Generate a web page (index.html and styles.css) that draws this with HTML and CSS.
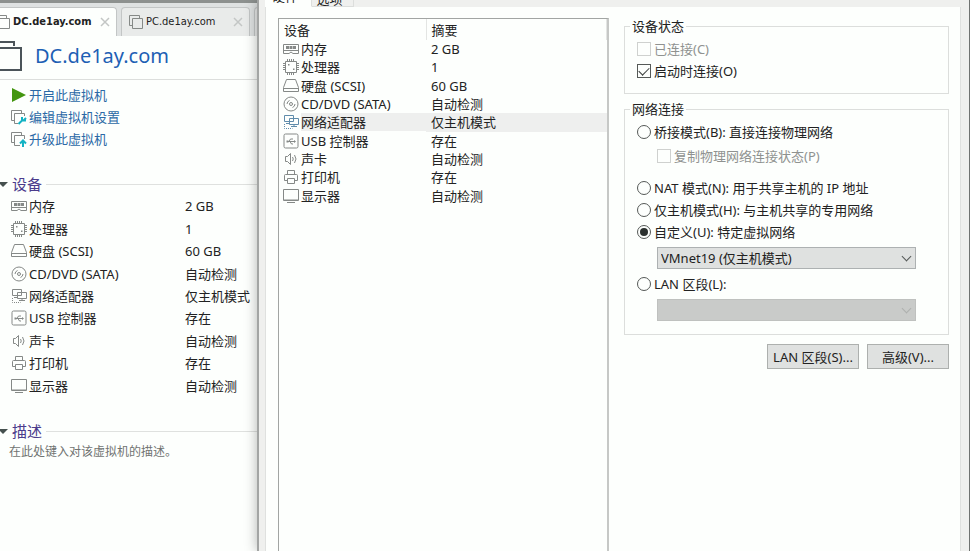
FILE: index.html
```html
<!DOCTYPE html>
<html lang="zh-CN">
  <head>
    <meta charset="UTF-8" />
    <meta name="viewport" content="width=device-width, initial-scale=1.0" />
    <title>DC.de1ay.com</title>
    <link rel="stylesheet" href="styles.css">
  </head>
  <body>
    <!-- icons used in both device lists -->
    <svg class="sprite" aria-hidden="true">
      <symbol id="i-memory" viewBox="0 0 18 16">
        <path d="M1.5 3.5h15v9h-5.5l-2-1.5-2 1.5h-5.500zM1.500 9.500h15"/>
        <path class="solid" d="M4 5h3v3H4zM7.500 5h3v3h-3zM11 5h3v3h-3z"/>
      </symbol>
      <symbol id="i-cpu" viewBox="0 0 18 16">
        <path d="M3.500 2.500h11v11h-11z"/>
        <path d="M5.500 0v2M7.500 0v2M9.500 0v2M11.500 0v2M5.500 14v2M7.500 14v2M9.500 14v2M11.500 14v2M1 4.500h2M1 6.500h2M1 8.500h2M1 10.500h2M15 4.500h2M15 6.500h2M15 8.500h2M15 10.500h2"/>
        <path class="solid" d="M6 5h1.500v1.500H6zM11 9.500h1.500V11H11z"/>
      </symbol>
      <symbol id="i-disk" viewBox="0 0 18 16">
        <path d="M4.500 1.500h9l3 8v4h-15v-4zM1.500 10.500h15"/>
      </symbol>
      <symbol id="i-cd" viewBox="0 0 18 16">
        <circle cx="9" cy="8" r="7"/>
        <circle cx="9" cy="8" r="1.500"/>
        <path d="M5 8a4 4 0 0 1 2.500-3.500M13 8a4 4 0 0 1-2.500 3.500"/>
      </symbol>
      <symbol id="i-net" viewBox="0 0 18 16">
        <path d="M2.500 1.500h9v6h-9zM4 9.500h4"/>
        <path class="fill" d="M7.500 4.500h9v6h-9z"/>
        <path d="M12 11v1.500M9 12.500h6"/>
        <path d="M2.500 10v4.500h8" stroke-dasharray="1 1"/>
      </symbol>
      <symbol id="i-usb" viewBox="0 0 18 16">
        <rect x="2" y="1" width="14" height="14" rx="1.500"/>
        <path d="M5 8.500h8M7 8.500L8.500 6h2.500M8 8.500l1.500 2.500H11"/>
        <path class="solid" d="M4.500 7.500h2v2h-2zM12 7l2 1.500-2 1.500z"/>
      </symbol>
      <symbol id="i-sound" viewBox="0 0 18 16">
        <path d="M3.500 5.500h2l3-3v11l-3-3h-2zM10.500 6q1.500 2 0 4M12.500 4q3 4 0 8"/>
      </symbol>
      <symbol id="i-printer" viewBox="0 0 18 16">
        <path d="M5.500 5V1.500h7V5M5 11.500H2.500v-5q0-1 1-1h11q1 0 1 1v5H13M5.500 9.500h7v5h-7z"/>
      </symbol>
      <symbol id="i-display" viewBox="0 0 18 16">
        <path d="M1.500 1.500h15v11h-15zM5 14.500h8"/>
        <path d="M2 12h14"/>
      </symbol>
      <symbol id="i-vm" viewBox="0 0 18 16">
        <path d="M2.500 11.500v-10h10M5.500 4.500h10v10h-10zM2.500 11.500H5M12.500 1.500V4"/>
      </symbol>
    </svg>

    <main class="vm">
      <nav class="vm-tabs">
        <div class="vm-tab active">
          <svg class="icon"><use href="#i-vm"/></svg>
          <a href="#">DC.de1ay.com</a>
          <button class="close" aria-label="关闭"><svg viewBox="0 0 10 10"><path d="M1 1l8 8M9 1l-8 8"/></svg></button>
        </div>
        <div class="vm-tab">
          <svg class="icon"><use href="#i-vm"/></svg>
          <a href="#">PC.de1ay.com</a>
          <button class="close" aria-label="关闭"><svg viewBox="0 0 10 10"><path d="M1 1l8 8M9 1l-8 8"/></svg></button>
        </div>
        <div class="vm-tab"></div>
      </nav>

      <header class="vm-title">
        <svg class="vm-logo" viewBox="0 0 34 32"><path d="M2 24V2h24v4M11 8h22v22H11z"/></svg>
        <h1>DC.de1ay.com</h1>
      </header>

      <ul class="actions">
        <li><a href="#"><svg class="icon play" viewBox="0 0 18 16"><path d="M2 1l14 7-14 7z"/></svg>开启此虚拟机</a></li>
        <li><a href="#"><svg class="icon" viewBox="0 0 18 16"><path d="M4 11.500H1.500v-10h10V4M8 14.500H4.500v-10h10V7"/><path class="teal" d="M8.500 15l4-4M12 8v3.500h4M16 9l-2.500 2.500"/></svg>编辑虚拟机设置</a></li>
        <li><a href="#"><svg class="icon" viewBox="0 0 18 16"><path d="M4 11.500H1.500v-10h10V4M10 14.500H4.500v-10h10V8"/><path class="teal" d="M13 16v-5M10 12.500l3-3 3 3"/></svg>升级此虚拟机</a></li>
      </ul>

      <section>
        <h2>设备</h2>
        <table class="devices">
          <tr><th><svg class="icon"><use href="#i-memory"/></svg>内存</th><td>2 GB</td></tr>
          <tr><th><svg class="icon"><use href="#i-cpu"/></svg>处理器</th><td>1</td></tr>
          <tr><th><svg class="icon"><use href="#i-disk"/></svg>硬盘 (SCSI)</th><td>60 GB</td></tr>
          <tr><th><svg class="icon"><use href="#i-cd"/></svg>CD/DVD (SATA)</th><td>自动检测</td></tr>
          <tr><th><svg class="icon"><use href="#i-net"/></svg>网络适配器</th><td>仅主机模式</td></tr>
          <tr><th><svg class="icon"><use href="#i-usb"/></svg>USB 控制器</th><td>存在</td></tr>
          <tr><th><svg class="icon"><use href="#i-sound"/></svg>声卡</th><td>自动检测</td></tr>
          <tr><th><svg class="icon"><use href="#i-printer"/></svg>打印机</th><td>存在</td></tr>
          <tr><th><svg class="icon"><use href="#i-display"/></svg>显示器</th><td>自动检测</td></tr>
        </table>
      </section>

      <section>
        <h2>描述</h2>
        <p>在此处键入对该虚拟机的描述。</p>
      </section>
    </main>

    <div class="dialog" role="dialog" aria-label="虚拟机设置">
      <div class="dialog-tabs">
        <button class="active">硬件</button>
        <button>选项</button>
      </div>

      <div class="dialog-page">
        <div class="hardware">
          <table>
            <thead>
              <tr><th>设备</th><th>摘要</th></tr>
            </thead>
            <tbody>
              <tr><td><svg class="icon"><use href="#i-memory"/></svg><span>内存</span></td><td>2 GB</td></tr>
              <tr><td><svg class="icon"><use href="#i-cpu"/></svg><span>处理器</span></td><td>1</td></tr>
              <tr><td><svg class="icon"><use href="#i-disk"/></svg><span>硬盘 (SCSI)</span></td><td>60 GB</td></tr>
              <tr><td><svg class="icon"><use href="#i-cd"/></svg><span>CD/DVD (SATA)</span></td><td>自动检测</td></tr>
              <tr class="selected"><td><svg class="icon"><use href="#i-net"/></svg><span>网络适配器</span></td><td>仅主机模式</td></tr>
              <tr><td><svg class="icon"><use href="#i-usb"/></svg><span>USB 控制器</span></td><td>存在</td></tr>
              <tr><td><svg class="icon"><use href="#i-sound"/></svg><span>声卡</span></td><td>自动检测</td></tr>
              <tr><td><svg class="icon"><use href="#i-printer"/></svg><span>打印机</span></td><td>存在</td></tr>
              <tr><td><svg class="icon"><use href="#i-display"/></svg><span>显示器</span></td><td>自动检测</td></tr>
            </tbody>
          </table>
        </div>

        <form class="settings">
          <fieldset>
            <legend>设备状态</legend>
            <label class="disabled"><input type="checkbox" disabled>已连接(C)</label>
            <label><input type="checkbox" checked>启动时连接(O)</label>
          </fieldset>

          <fieldset>
            <legend>网络连接</legend>
            <label><input type="radio" name="net">桥接模式(B): 直接连接物理网络</label>
            <label class="sub disabled"><input type="checkbox" disabled>复制物理网络连接状态(P)</label>
            <label><input type="radio" name="net">NAT 模式(N): 用于共享主机的 IP 地址</label>
            <label><input type="radio" name="net">仅主机模式(H): 与主机共享的专用网络</label>
            <label><input type="radio" name="net" checked>自定义(U): 特定虚拟网络</label>
            <div class="select">
              <select aria-label="特定虚拟网络"><option>VMnet19 (仅主机模式)</option></select>
            </div>
            <label><input type="radio" name="net">LAN 区段(L):</label>
            <div class="select">
              <select aria-label="LAN 区段" disabled></select>
            </div>
          </fieldset>

          <div class="buttons">
            <button type="button" class="wide">LAN 区段(S)...</button>
            <button type="button">高级(V)...</button>
          </div>
        </form>
      </div>
    </div>
  </body>
</html>
```

FILE: styles.css
```css
* {
  box-sizing: border-box;
}

body {
  display: flex;
  height: 100vh;
  margin: 0;
  overflow: hidden;
  background: #fdfffd;
  color: #222;
  font: 13px/18px "Noto Sans", "Noto Sans CJK SC", sans-serif;
}

button, select {
  font: inherit;
  color: inherit;
}

h1, h2, p, ul {
  margin: 0;
  padding: 0;
  font-weight: normal;
}

table {
  border-collapse: collapse;
  table-layout: fixed;
}

th, td {
  padding: 0;
  font-weight: normal;
  text-align: left;
  white-space: nowrap;
}

.sprite {
  position: absolute;
  width: 0;
  height: 0;
}

.icon {
  width: 18px;
  height: 16px;
  flex: none;
  margin-right: 1px;
  vertical-align: -3px;
  fill: none;
  stroke: #858987;
}

.icon .fill {
  fill: #fdfffd;
}

.solid {
  fill: #858987;
  stroke: none;
}

/* left side: virtual machine page */
.vm {
  width: 257px;
  flex: none;
  overflow: hidden;
}

.vm-tabs {
  display: flex;
  gap: 4px;
  height: 36px;
  margin-left: -12px;
  padding-top: 4px;
  border-top: 3px solid #8d918f;
  background: #dfe2e2;
}

.vm-tab {
  display: flex;
  align-items: center;
  flex: none;
  width: 129px;
  padding: 0 6px 0 5px;
  border: 1px solid #c3c6c6;
  border-bottom: 0;
  border-radius: 4px 4px 0 0;
  background: #e9ebea;
  font: 11px/18px "DejaVu Sans Condensed", "DejaVu Sans", sans-serif;
}

.vm-tab.active {
  background: #fdfffd;
  font-weight: bold;
}

.vm-tab a {
  flex: 1;
  color: #222;
  text-decoration: none;
}

.close {
  width: 10px;
  height: 10px;
  padding: 0;
  border: 0;
  background: none;
}

.close svg {
  display: block;
  stroke: #c3c6c5;
  stroke-width: 1.5;
}

.vm-title {
  display: flex;
  align-items: center;
  height: 44px;
  margin-left: -12px;
  padding-bottom: 4px;
  border-bottom: 1px solid #dcdedc;
}

.vm-logo {
  width: 34px;
  height: 32px;
  margin-right: 13px;
  fill: none;
  stroke: #4b5459;
  stroke-width: 2;
}

h1 {
  color: #1d60b4;
  font-size: 20px;
  line-height: 28px;
}

.actions {
  padding: 4px 0 0 10px;
  list-style: none;
}

.actions a {
  display: flex;
  align-items: center;
  height: 22px;
  color: #2b69a6;
  text-decoration: none;
}

.icon.play {
  fill: #43960f;
  stroke: none;
}

.icon .teal {
  stroke: #14b3c4;
  stroke-width: 2;
}

section {
  padding-top: 23px;
}

h2 {
  display: flex;
  align-items: center;
  gap: 4px;
  color: #4b3c8c;
  font-size: 15px;
  line-height: 22px;
}

h2::before {
  content: "";
  margin-left: -2px;
  border: 5px solid transparent;
  border-top-color: #45504e;
  border-bottom: 0;
}

h2::after {
  content: "";
  flex: 1;
  height: 1px;
  background: #dfe1df;
}

.devices {
  width: 247px;
  height: 202px;
  margin-left: 10px;
}

.devices th {
  width: 175px;
}

section p {
  padding: 1px 0 0 9px;
  color: #707371;
  font-size: 12px;
}

/* right side: settings dialog */
.dialog {
  display: flex;
  flex-direction: column;
  flex: 1;
  min-width: 0;
  padding: 0 8px 0 6px;
  border-left: 2px solid #a3a5a4;
  border-right: 1px solid #6f7371;
  background: #eff0ee;
  box-shadow: 0 0 12px rgba(0, 0, 0, 0.3);
}

/* only the lower edge of the tabs is in view */
.dialog-tabs {
  display: flex;
  align-items: flex-end;
  height: 7px;
  overflow: hidden;
}

.dialog-tabs button {
  flex: none;
  width: 42px;
  height: 20px;
  padding: 4px 6px 0 0;
  border: 1px solid #dcdedc;
  border-width: 0 1px 1px 0;
  background: #eff0ee;
  line-height: 12px;
}

.dialog-tabs .active {
  width: 47px;
  padding-top: 0;
  padding-bottom: 2px;
  border-bottom-color: #fdfffd;
  background: #fdfffd;
}

.dialog-page {
  display: flex;
  flex: 1;
  gap: 15px;
  padding: 11px 11px 0 12px;
  border: 1px solid #dfe1df;
  border-width: 0 1px;
  background: #fdfffd;
}

.hardware {
  flex: 1;
  border: 1px solid #a2a5a3;
  border-right: 2px solid #c6c8c6;
  border-bottom: 0;
}

.hardware table {
  width: 100%;
}

.hardware tbody {
  height: 165px;
}

.hardware th {
  height: 21px;
  padding-left: 5px;
  border-right: 1px solid #e3e5e3;
}

.hardware th:first-child {
  width: 147px;
}

.hardware td {
  height: 18px;
  padding-left: 5px;
}

.hardware td:first-child {
  display: flex;
  align-items: center;
  padding-left: 3px;
}

.hardware td span {
  flex: 1;
}

.hardware .selected span, .hardware .selected td:last-child {
  background: #eeefee;
}

.selected .icon {
  stroke: #5f8cab;
}

.settings {
  width: 325px;
  flex: none;
}

fieldset {
  margin: 0 0 7px;
  padding: 4px 32px 11px 12px;
  border: 1px solid #dcdedc;
}

legend {
  margin-left: -7px;
  padding: 0 2px;
  line-height: 16px;
}

label {
  display: flex;
  align-items: center;
  height: 22px;
}

label.disabled {
  color: #8f9290;
}

label.sub {
  margin: 2px 0 10px 20px;
}

input {
  display: grid;
  place-items: center;
  appearance: none;
  width: 14px;
  height: 14px;
  margin: 0 3px 0 0;
  border: 1px solid #555957;
  background: #fdfffd;
}

input:disabled {
  border-color: #cfd1cf;
}

input[type="radio"] {
  border-radius: 50%;
}

input[type="radio"]:checked::before {
  content: "";
  width: 8px;
  height: 8px;
  border-radius: 50%;
  background: #2b302e;
}

input[type="checkbox"]:checked::before {
  content: "";
  width: 9px;
  height: 5px;
  margin-bottom: 3px;
  border: solid #3a3e3c;
  border-width: 0 0 1px 1px;
  transform: rotate(-45deg);
}

.select {
  position: relative;
  margin: 4px 0 4px 20px;
}

.select:last-child {
  margin-bottom: 2px;
}

.select::after {
  content: "";
  position: absolute;
  top: 6px;
  right: 6px;
  width: 6px;
  height: 6px;
  border: solid #555957;
  border-width: 0 1px 1px 0;
  transform: rotate(45deg);
  pointer-events: none;
}

.select:has(:disabled)::after {
  border-color: #aeb0ae;
}

select {
  display: block;
  appearance: none;
  width: 100%;
  height: 22px;
  padding: 0 3px;
  border: 1px solid #adb1b2;
  border-radius: 0;
  background: #dfe1e0;
}

select:disabled {
  border-color: #bfc1bf;
  background: #c9cbc9;
  opacity: 1;
}

.buttons {
  display: flex;
  justify-content: flex-end;
  gap: 8px;
  padding-top: 2px;
}

.buttons button {
  width: 82px;
  height: 25px;
  padding: 0;
  border: 1px solid #adb0ae;
  background: #dfe1e0;
}

.buttons .wide {
  width: 92px;
}
```
